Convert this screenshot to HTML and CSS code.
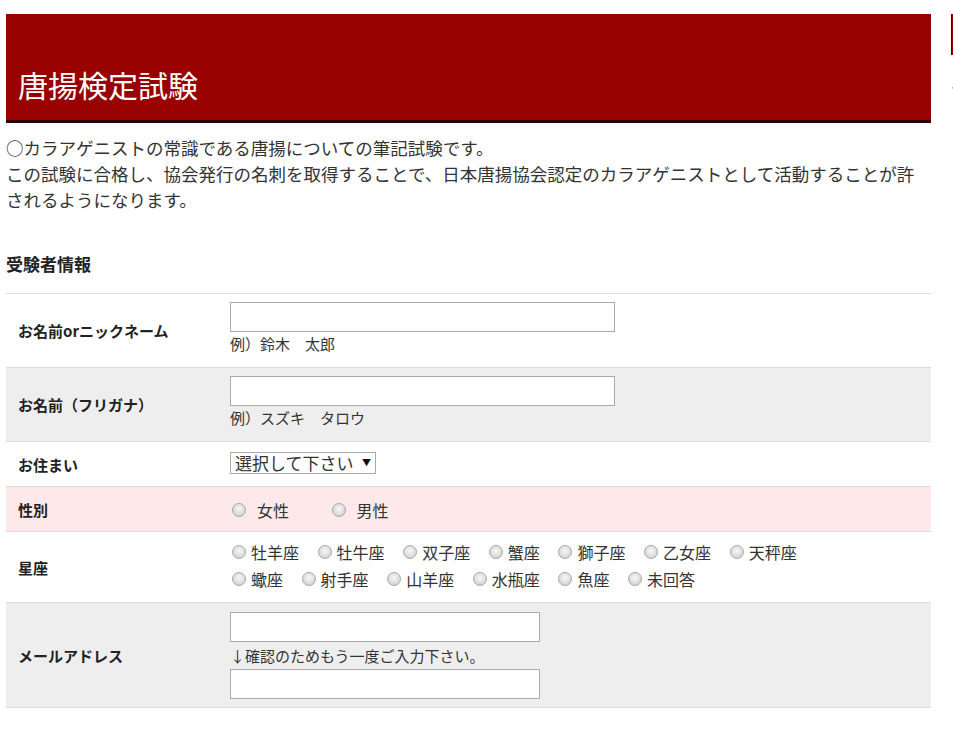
FILE: index.html
```html
<!DOCTYPE html>
<html lang="ja">
    <head>
        <meta charset="utf-8">
        <title>唐揚検定試験</title>
        <link rel="stylesheet" href="styles.css">
    </head>
    <body>
        <div class="page">
            <div class="main">
                <h1 class="title">唐揚検定試験</h1>
                <p class="lead">
                    ○カラアゲニストの常識である唐揚についての筆記試験です。<br>
                    この試験に合格し、協会発行の名刺を取得することで、日本唐揚協会認定のカラアゲニストとして活動することが許されるようになります。
                </p>

                <h2 class="section">受験者情報</h2>

                <div class="form">
                    <div class="row">
                        <div class="label">お名前orニックネーム</div>
                        <div class="value">
                            <input type="text" class="text">
                            <div class="hint">例）鈴木　太郎</div>
                        </div>
                    </div>
                    <div class="row gray">
                        <div class="label">お名前（フリガナ）</div>
                        <div class="value">
                            <input type="text" class="text">
                            <div class="hint">例）スズキ　タロウ</div>
                        </div>
                    </div>
                    <div class="row">
                        <div class="label">お住まい</div>
                        <div class="value pick">
                            <span class="select-wrap">
                                <select class="select">
                                    <option>選択して下さい</option>
                                </select>
                            </span>
                        </div>
                    </div>
                    <div class="row pink">
                        <div class="label">性別</div>
                        <div class="value choices gender">
                            <label class="choice"><input type="radio" name="sex">女性</label>
                            <label class="choice"><input type="radio" name="sex">男性</label>
                        </div>
                    </div>
                    <div class="row">
                        <div class="label">星座</div>
                        <div class="value choices stars">
                            <label class="choice"><input type="radio" name="star">牡羊座</label>
                            <label class="choice"><input type="radio" name="star">牡牛座</label>
                            <label class="choice"><input type="radio" name="star">双子座</label>
                            <label class="choice"><input type="radio" name="star">蟹座</label>
                            <label class="choice"><input type="radio" name="star">獅子座</label>
                            <label class="choice"><input type="radio" name="star">乙女座</label>
                            <label class="choice"><input type="radio" name="star">天秤座</label>
                            <br>
                            <label class="choice"><input type="radio" name="star">蠍座</label>
                            <label class="choice"><input type="radio" name="star">射手座</label>
                            <label class="choice"><input type="radio" name="star">山羊座</label>
                            <label class="choice"><input type="radio" name="star">水瓶座</label>
                            <label class="choice"><input type="radio" name="star">魚座</label>
                            <label class="choice"><input type="radio" name="star">未回答</label>
                        </div>
                    </div>
                    <div class="row gray">
                        <div class="label">メールアドレス</div>
                        <div class="value mail">
                            <input type="text" class="text short">
                            <div class="hint mid">↓確認のためもう一度ご入力下さい。</div>
                            <input type="text" class="text short">
                        </div>
                    </div>
                </div>
            </div>

            <div class="side">
                <div class="side-head">ルール</div>
                <div class="side-text">ルールについて</div>
                <div class="side-small">・</div>
            </div>
        </div>
    </body>
</html>
```

FILE: styles.css
```css
html, body {
    margin: 0;
    padding: 0;
    overflow: hidden;
}

body {
    background-color: white;
    color: #333;
    font-family: "Noto Sans CJK JP", "Noto Sans", sans-serif;
}

.page {
    display: flex;
    align-items: flex-start;
    padding: 14px 0 0 6px;
    width: 1200px;
}

.main {
    width: 925px;
    flex: none;
}

.title {
    margin: 0;
    background-color: #990000;
    border-bottom: 3px solid #2a0000;
    color: white;
    font-size: 30px;
    font-weight: normal;
    line-height: 36px;
    padding: 52px 12px 18px;
}

.lead {
    margin: 12px 0 0;
    font-size: 17.5px;
    line-height: 26px;
    color: #333;
}

.section {
    margin: 41px 0 19px;
    font-size: 17px;
    line-height: 20px;
    color: #222;
}

.form {
    border-top: 1px solid #dcdcdc;
}

.row {
    display: grid;
    grid-template-columns: 224px 1fr;
    align-items: center;
    border-bottom: 1px solid #dcdcdc;
}

.row.gray {
    background-color: #eeeeee;
}

.row.pink {
    background-color: #fde9e9;
}

.label {
    padding-left: 12px;
    font-size: 15px;
    font-weight: bold;
    color: #222;
}

.value {
    padding: 8px 0 11px;
    font-size: 15px;
    color: #333;
}

.text {
    display: block;
    box-sizing: border-box;
    width: 385px;
    height: 30px;
    margin: 0;
    border: 1px solid #aaa;
    background-color: white;
}

.text.short {
    width: 310px;
}

.hint {
    line-height: 24px;
}

.hint.mid {
    line-height: 27px;
}

.value.mail {
    padding: 9px 0 8px;
}

.value.pick {
    padding: 10px 0 12px;
    line-height: 22px;
}

.select-wrap {
    position: relative;
    display: inline-block;
    vertical-align: top;
}

.select-wrap::after {
    content: "▼";
    position: absolute;
    right: 5px;
    top: 0;
    font-size: 9px;
    color: #111;
}

.select {
    appearance: none;
    -webkit-appearance: none;
    display: block;
    box-sizing: border-box;
    width: 146px;
    height: 22px;
    margin: 0;
    padding: 0 16px 0 4px;
    border: 1px solid #aaa;
    border-radius: 0;
    background-color: white;
    font-family: "Noto Sans CJK JP", sans-serif;
    font-size: 17px;
    line-height: 20px;
    color: #333;
}

.choices {
    font-size: 16px;
}

.gender {
    padding: 11px 0 9px;
    line-height: 24px;
}

.stars {
    padding: 7px 0 9px;
    line-height: 27px;
}

.choice {
    display: inline-block;
    margin-right: 13px;
}

.choice input {
    appearance: none;
    -webkit-appearance: none;
    box-sizing: border-box;
    width: 14px;
    height: 14px;
    margin: 0 5px 0 2px;
    vertical-align: 0;
    border: 1px solid #a8a8a8;
    border-radius: 50%;
    background: radial-gradient(circle at 50% 40%, #f8f8f8 0, #dedede 55%, #c6c6c6 100%);
}

.gender .choice {
    margin-right: 37px;
}

.gender .choice input {
    margin-right: 11px;
}

.side {
    margin-left: 20px;
    width: 200px;
    flex: none;
}

.side-head {
    background-color: #990000;
    border-left: 1px solid #500000;
    height: 41px;
    color: white;
}

.side-text {
    margin-top: 16px;
    font-size: 15px;
    color: #666;
}

.side-small {
    font-size: 12px;
    color: #666;
}
```
